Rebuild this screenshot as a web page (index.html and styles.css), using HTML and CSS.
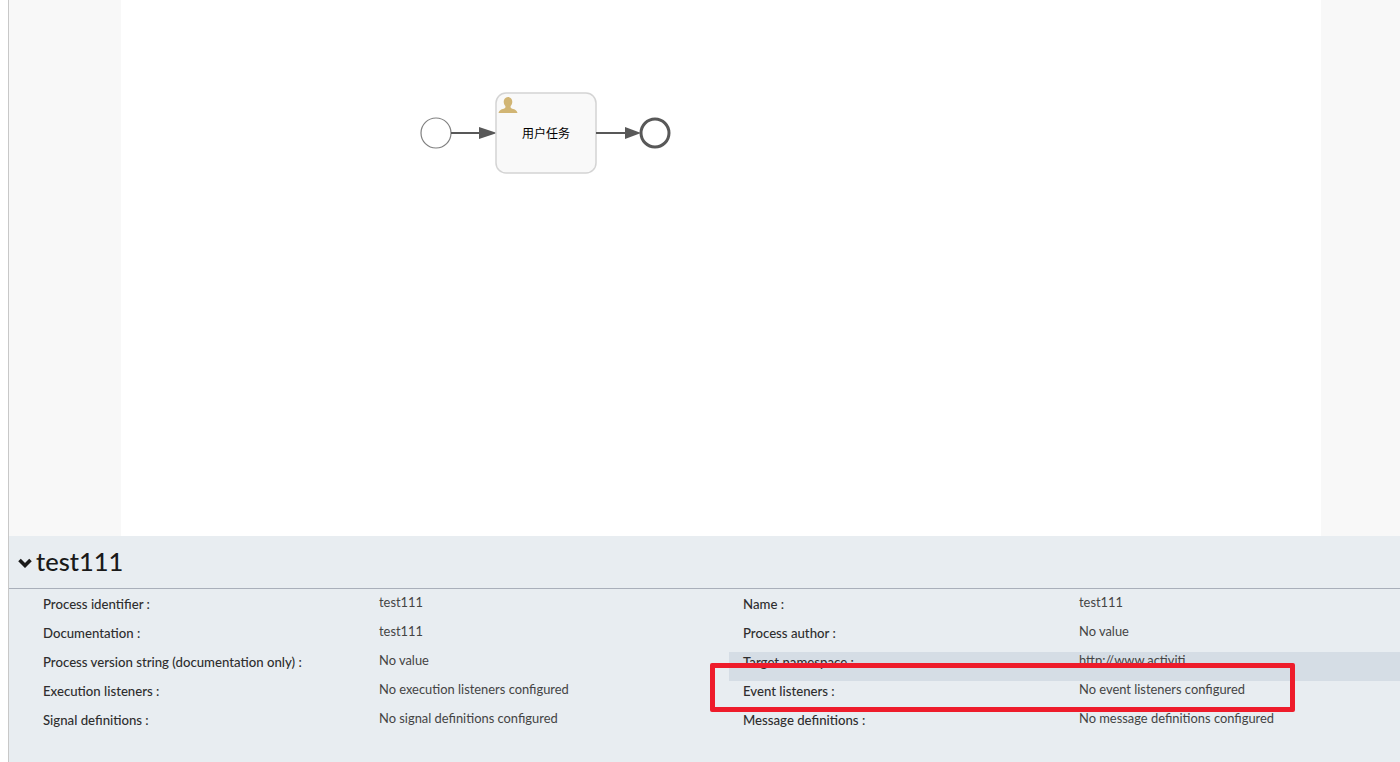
FILE: index.html
```html
<!DOCTYPE html>
<html lang="en">
<head>
    <meta charset="UTF-8">
    <title>test111</title>
    <link rel="stylesheet" href="styles.css">
</head>
<body>

<div class="editor">
    <div class="canvasWrap">
        <div class="canvas">
            <svg class="diagram" width="1200" height="536" viewBox="0 0 1200 536">
                <circle cx="315" cy="133" r="15" fill="#fff" stroke="#808080" stroke-width="1.2"/>
                <path d="M330 133H360" stroke="#585858" stroke-width="2" fill="none"/>
                <path d="M358 127L376 133L358 139Z" fill="#585858"/>
                <rect x="375" y="93" width="100" height="80" rx="10" fill="#f9f9f9" stroke="#d4d4d4" stroke-width="1.500"/>
                <path d="M387 97c2.700 0 4.300 2.200 4.300 4.800 0 1.800-.8 3.300-1.700 4.200v1.300c0 .8 1 1.200 2.700 1.800 2.200.8 3.700 1.600 4.200 3.900h-19c.5-2.300 2-3.100 4.200-3.900 1.700-.6 2.700-1 2.700-1.800V106c-.9-.9-1.700-2.400-1.700-4.200 0-2.600 1.600-4.800 4.300-4.800z" fill="#d1b574"/>
                <text x="425" y="137.500" class="taskLabel" text-anchor="middle">用户任务</text>
                <path d="M475 133H506" stroke="#585858" stroke-width="2" fill="none"/>
                <path d="M504 127L520 133L504 139Z" fill="#585858"/>
                <circle cx="534" cy="133" r="14" fill="#fff" stroke="#585858" stroke-width="3"/>
            </svg>
        </div>
    </div>

    <div class="properties">
        <div class="propertiesHead">
            <svg class="chevron" width="14" height="10" viewBox="0 0 14 10">
                <path d="M1.500 2L7 7.500L12.500 2" fill="none" stroke="#1a1a1a" stroke-width="3.600"/>
            </svg>
            <h2>test111</h2>
        </div>
        <div class="propertyGrid">
            <div class="propertyRow"><span class="propertyName">Process identifier :</span><span class="propertyValue">test111</span></div>
            <div class="propertyRow"><span class="propertyName">Name :</span><span class="propertyValue">test111</span></div>
            <div class="propertyRow"><span class="propertyName">Documentation :</span><span class="propertyValue">test111</span></div>
            <div class="propertyRow"><span class="propertyName">Process author :</span><span class="propertyValue">No value</span></div>
            <div class="propertyRow"><span class="propertyName">Process version string (documentation only) :</span><span class="propertyValue">No value</span></div>
            <div class="propertyRow selected"><span class="propertyName">Target namespace :</span><span class="propertyValue">http://www.activiti</span></div>
            <div class="propertyRow"><span class="propertyName">Execution listeners :</span><span class="propertyValue">No execution listeners configured</span></div>
            <div class="propertyRow"><span class="propertyName">Event listeners :</span><span class="propertyValue">No event listeners configured</span></div>
            <div class="propertyRow"><span class="propertyName">Signal definitions :</span><span class="propertyValue">No signal definitions configured</span></div>
            <div class="propertyRow"><span class="propertyName">Message definitions :</span><span class="propertyValue">No message definitions configured</span></div>
        </div>
    </div>
</div>

<div class="markup"></div>

</body>
</html>
```

FILE: styles.css
```css
html, body {
    margin: 0;
    padding: 0;
    height: 100%;
    overflow: hidden;
    background-color: #fff;
    font-family: Lato, sans-serif;
}

.editor {
    margin-left: 8px;
    height: 762px;
    border-left: 1px solid #c8c8c8;
    display: flex;
    flex-direction: column;
}

.canvasWrap {
    height: 536px;
    background-color: #f8f8f8;
    padding-left: 112px;
}

.canvas {
    width: 1200px;
    height: 536px;
    background-color: #fff;
}

.diagram {
    display: block;
}

.taskLabel {
    font-family: "Noto Sans CJK SC", sans-serif;
    font-size: 12px;
    fill: #000;
}

.properties {
    flex: 1;
    background-color: #e8edf1;
}

.propertiesHead {
    height: 50px;
    padding: 0 0 2px 9px;
    display: flex;
    align-items: center;
    gap: 4px;
    border-bottom: 1px solid #a9afba;
}

.chevron {
    margin-top: 4px;
}

.propertiesHead h2 {
    margin: 0;
    font-size: 25.500px;
    font-weight: 500;
    color: #1a1a1a;
}

.propertyGrid {
    display: grid;
    grid-template-columns: 700px 671px;
    grid-auto-rows: 29px;
    padding: 5px 0 0 20px;
}

.propertyRow {
    display: flex;
    align-items: flex-start;
    padding-left: 14px;
    overflow: hidden;
}

.propertyRow.selected {
    background-color: #d5dde5;
}

.propertyName {
    width: 336px;
    padding-top: 1px;
    font-size: 13.2px;
    line-height: 19px;
    font-weight: 500;
    color: #2e2e2e;
}

.propertyValue {
    font-size: 12.900px;
    line-height: 17px;
    color: #444;
}

/* annotation drawn on top of the screenshot */
.markup {
    position: absolute;
    left: 710px;
    top: 663px;
    width: 575px;
    height: 39px;
    border: 5px solid #ee1c2b;
    border-radius: 2px;
}
```
